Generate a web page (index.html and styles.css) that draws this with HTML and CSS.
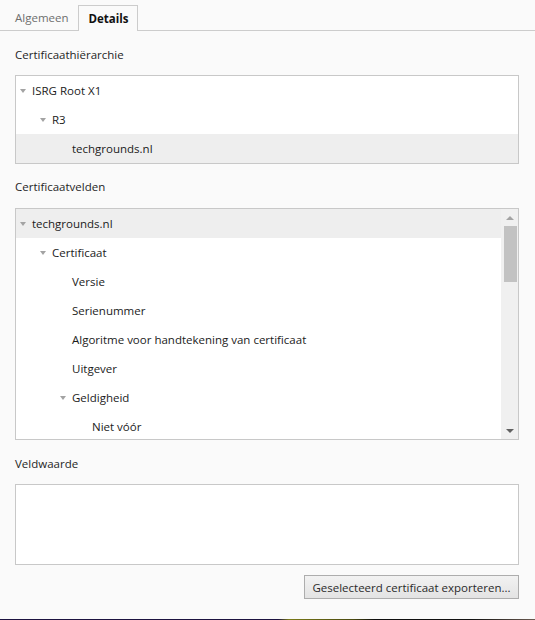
FILE: index.html
```html
<!DOCTYPE html>
<html lang="nl">
<head>
<meta charset="utf-8">
<title>Certificaatviewer</title>
<link rel="stylesheet" href="styles.css">
</head>
<body>
<div class="page">
  <div class="tabs">
    <div class="tab">Algemeen</div>
    <div class="tab active">Details</div>
  </div>
  <div class="content">
    <div class="label first">Certificaathiërarchie</div>
    <div class="box hierarchy">
      <div class="row l0"><span class="twisty open"></span><span>ISRG Root X1</span></div>
      <div class="row l1"><span class="twisty open"></span><span>R3</span></div>
      <div class="row l2 selected"><span class="twisty"></span><span>techgrounds.nl</span></div>
    </div>

    <div class="label">Certificaatvelden</div>
    <div class="box fields">
      <div class="fields-list">
        <div class="row l0 selected"><span class="twisty open"></span><span>techgrounds.nl</span></div>
        <div class="row l1"><span class="twisty open"></span><span>Certificaat</span></div>
        <div class="row l2"><span class="twisty"></span><span>Versie</span></div>
        <div class="row l2"><span class="twisty"></span><span>Serienummer</span></div>
        <div class="row l2"><span class="twisty"></span><span>Algoritme voor handtekening van certificaat</span></div>
        <div class="row l2"><span class="twisty"></span><span>Uitgever</span></div>
        <div class="row l2"><span class="twisty open"></span><span>Geldigheid</span></div>
        <div class="row l3"><span class="twisty"></span><span>Niet vóór</span></div>
      </div>
      <div class="scrollbar">
        <div class="arrow up"></div>
        <div class="track"><div class="thumb"></div></div>
        <div class="arrow down"></div>
      </div>
    </div>

    <div class="label third">Veldwaarde</div>
    <div class="box value"></div>

    <div class="actions">
      <button class="btn" type="button">Geselecteerd certificaat exporteren...</button>
    </div>
  </div>
  <div class="desktop-edge"></div>
</div>
</body>
</html>
```

FILE: styles.css
```css
* { box-sizing: border-box; }

html, body {
  margin: 0;
  padding: 0;
  background: #fafafa;
}

body {
  font-family: "Open Sans", "Noto Sans", "Liberation Sans", sans-serif;
  font-size: 11.5px;
  color: #1b1b1b;
}

.page {
  width: 535px;
  height: 620px;
  display: flex;
  flex-direction: column;
  background: #fafafa;
}

.tabs {
  height: 31px;
  border-bottom: 1px solid #cccccc;
  display: flex;
  align-items: flex-end;
  padding-left: 7px;
}

.tab {
  height: 25px;
  padding: 0 9px 0 8px;
  display: flex;
  align-items: center;
  color: #6e6e6e;
}

.tab.active {
  height: 26px;
  margin-bottom: -1px;
  padding: 0 9px 1px 10px;
  border: 1px solid #cccccc;
  border-bottom: none;
  background: #fafafa;
  color: #111;
  font-weight: 700;
}

.content {
  padding: 0 16px 0 15px;
  display: flex;
  flex-direction: column;
}

.label {
  height: 16px;
  line-height: 16px;
  margin: 15px 0 13px;
  color: #1f1f1f;
}

.label.first { margin-top: 16px; margin-bottom: 12px; }
.label.third { margin-top: 16px; margin-bottom: 12px; }

.box {
  border: 1px solid #c8c8c8;
  background: #ffffff;
}

.hierarchy {
  height: 89px;
}

.row {
  height: 29px;
  display: flex;
  align-items: center;
  white-space: nowrap;
}

.row.l0 { padding-left: 4px; }
.row.l1 { padding-left: 24px; }
.row.l2 { padding-left: 44px; }
.row.l3 { padding-left: 64px; }

.row.selected { background: #eeeeee; }

.twisty {
  width: 12px;
  flex: none;
  display: flex;
  align-items: center;
}

.twisty.open::before {
  content: "";
  width: 0;
  height: 0;
  border-left: 3.5px solid transparent;
  border-right: 3.5px solid transparent;
  border-top: 4px solid #a3a3a3;
  margin-top: 1px;
}

.fields {
  height: 232px;
  display: flex;
  overflow: hidden;
}

.fields-list {
  flex: 1;
  overflow: hidden;
}

.scrollbar {
  width: 17px;
  flex: none;
  background: #f0f0f0;
  display: flex;
  flex-direction: column;
  align-items: center;
}

.arrow {
  height: 17px;
  width: 17px;
  display: flex;
  align-items: center;
  justify-content: center;
}

.arrow::before {
  content: "";
  width: 0;
  height: 0;
  border-left: 4px solid transparent;
  border-right: 4px solid transparent;
}

.arrow.up::before { border-bottom: 4px solid #a3a3a3; }
.arrow.down::before { border-top: 4px solid #606060; }

.track {
  flex: 1;
  width: 17px;
  display: flex;
  justify-content: center;
}

.thumb {
  width: 13px;
  height: 56px;
  margin-left: 1px;
  background: #c2c2c2;
}

.value {
  height: 81px;
}

.actions {
  display: flex;
  justify-content: flex-end;
  margin-top: 10px;
}

.btn {
  width: 215px;
  height: 24px;
  border: 1px solid #adadad;
  background: linear-gradient(#f2f2f2, #e3e3e3);
  font-family: inherit;
  font-size: 11.5px;
  color: #2a2a2a;
  padding: 0;
}

.desktop-edge {
  margin-top: auto;
  height: 1px;
  background: linear-gradient(90deg, #1c1240 0%, #1c1240 52%, #7a7a18 54%, #4a4a10 66%, #0e0e0e 70%, #111 88%, #6a5a50 100%);
}
```
